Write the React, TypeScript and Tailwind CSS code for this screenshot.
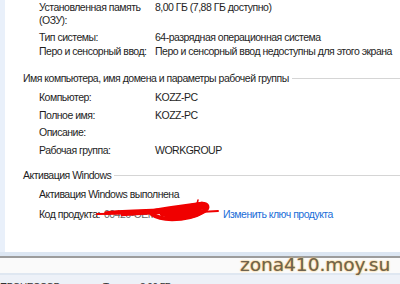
import React from "react";

const font = { fontFamily: '"Liberation Sans", Arial, sans-serif', letterSpacing: "-0.5px" };

function Line({ label, value, mt }: { label: string; value?: string; mt: string }) {
  return (
    <div className={`flex h-[14px] items-center ${mt}`}>
      <div className="w-[155px] pl-[39px] shrink-0 whitespace-nowrap">{label}</div>
      <div className="whitespace-nowrap">{value}</div>
    </div>
  );
}

export default function App() {
  return (
    <div className="w-[400px] h-[284px] overflow-hidden bg-white relative text-[10.5px] leading-[13px] text-[#1e1e1e]" style={font}>
      <div className="flex h-[252px]">
        <div className="w-[5px] bg-[#e9f0fa] shrink-0" />
        <div className="flex-1 flex flex-col -ml-[5px] pt-[1px]">
          <div className="flex h-[28px]">
            <div className="w-[155px] pl-[39px] shrink-0 whitespace-nowrap">
              <div>Установленная память</div>
              <div>(ОЗУ):</div>
            </div>
            <div className="whitespace-nowrap">8,00 ГБ (7,88 ГБ доступно)</div>
          </div>
          <Line label="Тип системы:" value="64-разрядная операционная система" mt="mt-[1px]" />
          <Line label="Перо и сенсорный ввод:" value="Перо и сенсорный ввод недоступны для этого экрана" mt="mt-0" />
          <div className="flex items-center h-[14px] mt-[13px] pl-[23px]">
            <span className="whitespace-nowrap">Имя компьютера, имя домена и параметры рабочей группы</span>
            <div className="flex-1 h-px bg-[#d5d5d5] ml-[3px]" />
          </div>
          <Line label="Компьютер:" value="KOZZ-PC" mt="mt-[5px]" />
          <Line label="Полное имя:" value="KOZZ-PC" mt="mt-[4px]" />
          <Line label="Описание:" mt="mt-[3px]" />
          <Line label="Рабочая группа:" value="WORKGROUP" mt="mt-[4px]" />
          <div className="flex items-center h-[14px] mt-[11px] pl-[23px]">
            <span className="whitespace-nowrap">Активация Windows</span>
            <div className="flex-1 h-px bg-[#d5d5d5] ml-[3px]" />
          </div>
          <div className="flex h-[14px] items-center mt-[5px] pl-[39px] whitespace-nowrap">Активация Windows выполнена</div>
          <div className="flex h-[14px] items-center mt-[6px] pl-[39px] relative">
            <span className="whitespace-nowrap">Код продукта:</span>
            <span className="ml-[4px] text-[#666] whitespace-nowrap">00426-OEM</span>
            <span className="absolute left-[223px] text-[#1a6ed8] whitespace-nowrap">Изменить ключ продукта</span>
            <svg className="absolute left-[96px] top-[-8px]" width="124" height="26" viewBox="0 0 124 26">
              <path d="M1 15 L40 14.5 L70 14 L104 13 L122 12" stroke="#f00000" strokeWidth="2" fill="none" strokeLinecap="round" />
              <path d="M10 14 C30 12,50 12,70 11 C85 10,98 8,108 7" stroke="#f00000" strokeWidth="3.5" fill="none" strokeLinecap="round" />
              <path d="M54 13 C72 9,90 7,106 5 C112 5,113 9,108 12 C98 18,88 20,76 20 C68 20,60 18,56 15" stroke="#f00000" strokeWidth="4.5" fill="none" strokeLinecap="round" />
              <path d="M66 15 C84 13,96 11,108 8 M74 18 C90 19,100 17,106 13 M84 10 C94 7,100 6,106 5 M60 12 C80 11,96 10,104 9 M70 16 C86 16,98 14,104 11" stroke="#f00000" strokeWidth="4.5" fill="none" strokeLinecap="round" />
              <path d="M101 5 L102 1" stroke="#f00000" strokeWidth="1.5" fill="none" strokeLinecap="round" />
              <path d="M26 16 L56 14 M20 13 L50 12" stroke="#f00000" strokeWidth="2.5" fill="none" strokeLinecap="round" />
            </svg>
          </div>
        </div>
      </div>
      <div className="h-[4px] bg-[#dce6f2]" />
      <div className="h-[2px] bg-[#9c9c9c]" />
      <div className="h-[15px] bg-[#fafafa]" />
      <div className="h-[2px] bg-[#dfe7f1]" />
      <div className="h-[11px] bg-[#edf1f8] overflow-hidden relative">
        <div className="absolute left-0 top-[7px] text-[10px] leading-[12px] text-[#333] whitespace-nowrap">ПРОЦЕССОР</div>
        <div className="absolute left-[103px] top-[7px] text-[10px] leading-[12px] text-[#333] whitespace-nowrap">Т</div>
        <div className="absolute left-[140px] top-[7px] text-[10px] leading-[12px] text-[#333] whitespace-nowrap">8,00 ГБ</div>
      </div>
      <div
        className="absolute left-[240px] top-[253px] text-[18.5px] leading-[24px] text-[#6e6350]"
        style={{ fontFamily: '"DejaVu Sans", sans-serif', letterSpacing: "0px", textShadow: "0 0 2px #f5c060, 0 0 1px #f0b040" }}
      >
        zona410.moy.su
      </div>
    </div>
  );
}
